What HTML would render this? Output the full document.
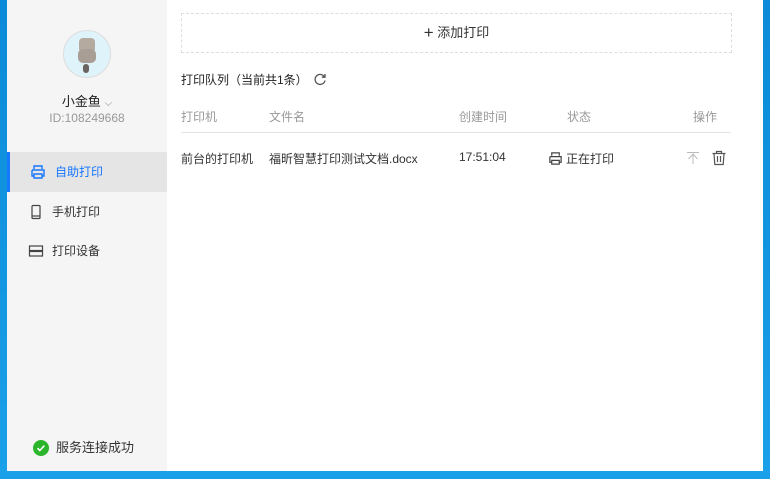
<!DOCTYPE html>
<html><head><meta charset="utf-8"><style>
*{margin:0;padding:0;box-sizing:border-box}
body{width:770px;height:479px;overflow:hidden;background:linear-gradient(180deg,#0a8ad8,#1aa0e8);font-family:"Liberation Sans","Noto Sans CJK SC",sans-serif;font-size:12px;color:#333;position:relative}
.win{position:absolute;left:7px;top:0;width:756px;height:471px;background:#fff}
.side{position:absolute;left:0;top:0;width:160px;height:471px;background:#f5f5f5}
.av{position:absolute;left:56px;top:30px;width:48px;height:48px;border-radius:50%;border:1px solid #ddd;background:#dff3fb;overflow:hidden}
.name{position:absolute;left:0;width:160px;top:91px;text-align:center;font-size:13px;color:#222}
.id{position:absolute;left:0;width:160px;top:111px;text-align:center;color:#999;font-size:12px}
.menu{position:absolute;left:0;width:160px;height:40px;line-height:40px;padding-left:45px;font-size:12px;color:#333}
.menu svg{position:absolute;left:21px;top:12px}
.act{background:#e5e5e5;color:#1677ff;border-left:3px solid #1677ff}
.act svg{left:20px}
.ok{position:absolute;left:26px;top:440px;font-size:13px;color:#333;line-height:16px}
.ok i{display:inline-block;width:16px;height:16px;border-radius:50%;background:#2bb52b;vertical-align:top;margin-right:7px;position:relative}
.main{position:absolute;left:174px;top:0}
.add{position:absolute;left:0;top:13px;width:551px;height:40px;border:1px dashed #ddd;text-align:center;line-height:38px;font-size:13px;color:#333}
.t{position:absolute;white-space:nowrap}
.h{color:#999;top:108px}
.line{position:absolute;left:0;top:132px;width:550px;height:1px;background:#e3e3e3}
.r{top:150px;color:#333}
</style></head><body>
<div class="win">
<div class="side">
 <div class="av">
  <div style="position:absolute;left:15px;top:7px;width:16px;height:13px;background:#b5aaa0;border-radius:4px 4px 2px 2px"></div>
  <div style="position:absolute;left:14px;top:18px;width:18px;height:14px;background:#a89e95;border-radius:5px"></div>
  <div style="position:absolute;left:19px;top:33px;width:6px;height:9px;background:#6c6460;border-radius:3px"></div>
 </div>
 <div class="name">小金鱼 <span style="color:#888;font-size:10px">⌵</span></div>
 <div class="id">ID:108249668</div>
 <div class="menu act" style="top:152px"><svg width="16" height="16" viewBox="0 0 16 16" fill="none" stroke="#1677ff" stroke-width="1.4"><path d="M4 5V2h8v3M2 6h12v6h-2M4 12H2V6M4 10h8v4H4z"/></svg>自助打印</div>
 <div class="menu" style="top:192px"><svg width="16" height="16" viewBox="0 0 16 16" fill="none" stroke="#444" stroke-width="1.2"><rect x="4" y="1.5" width="8" height="13" rx="1"/><path d="M4 12h8"/></svg>手机打印</div>
 <div class="menu" style="top:231px"><svg width="16" height="16" viewBox="0 0 16 16" fill="none" stroke="#444" stroke-width="1.2"><rect x="1.5" y="3" width="13" height="4.5"/><rect x="1.5" y="8.5" width="13" height="4.5"/></svg>打印设备</div>
 <div class="ok"><i><svg width="16" height="16" viewBox="0 0 16 16" style="position:absolute;left:0;top:0"><path d="M4.5 8.2l2.3 2.3 4.5-4.8" fill="none" stroke="#fff" stroke-width="1.6"/></svg></i>服务连接成功</div>
</div>
<div class="main">
 <div class="add"><span style="font-size:17px;font-weight:300;vertical-align:-1px">+</span> 添加打印</div>
 <div class="t" style="left:0;top:71px;color:#222">打印队列（当前共1条） <svg width="14" height="14" viewBox="0 0 14 14" style="vertical-align:-2px;margin-left:2px" fill="none" stroke="#555" stroke-width="1.3"><path d="M11.5 5A5 5 0 1 0 12 8.5"/><path d="M12 2v3.2H8.8"/></svg></div>
 <div class="t h" style="left:0">打印机</div>
 <div class="t h" style="left:88px">文件名</div>
 <div class="t h" style="left:278px">创建时间</div>
 <div class="t h" style="left:386px">状态</div>
 <div class="t h" style="left:512px">操作</div>
 <div class="line"></div>
 <div class="t r" style="left:0">前台的打印机</div>
 <div class="t r" style="left:88px">福昕智慧打印测试文档.docx</div>
 <div class="t r" style="left:278px">17:51:04</div>
 <div class="t r" style="left:367px"><svg width="15" height="15" viewBox="0 0 16 16" fill="none" stroke="#444" stroke-width="1.3" style="vertical-align:-3px;margin-right:3px"><path d="M4 5V2h8v3M2 6h12v6h-2M4 12H2V6M4 10h8v4H4z"/></svg>正在打印</div>
 <svg class="t" style="left:505px;top:151px" width="14" height="14" viewBox="0 0 14 14" fill="none" stroke="#bbb" stroke-width="1"><path d="M1 1.5h12M7 3v10M2.5 8L7 3l4.5 5"/></svg>
 <svg class="t" style="left:530px;top:150px" width="16" height="16" viewBox="0 0 16 16" fill="none" stroke="#555" stroke-width="1.2"><path d="M1.5 3.5h13M5.5 3.5V1.5h5v2M3 3.5l.8 11h8.4l.8-11M6.5 6v6M9.5 6v6"/></svg>
</div>
</div>
</body></html>
